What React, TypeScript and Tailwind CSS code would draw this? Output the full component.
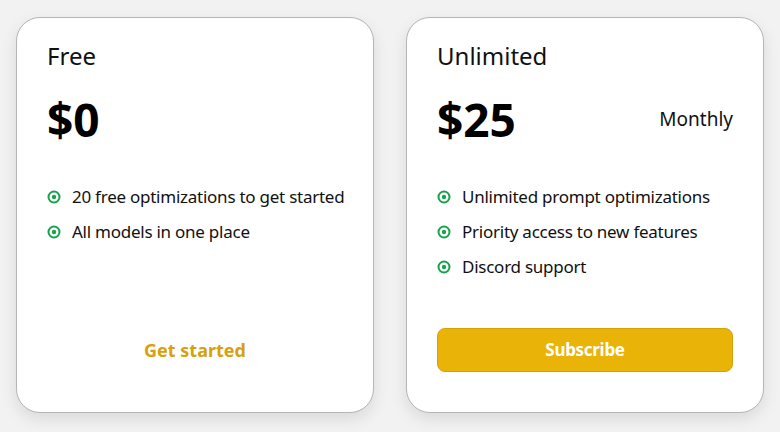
import React from "react";

function Dot() {
  return (
    <svg width="14" height="14" viewBox="0 0 14 14" className="shrink-0">
      <circle cx="7" cy="7" r="5.5" fill="none" stroke="#16a34a" strokeWidth="2" />
      <circle cx="7" cy="7" r="2.2" fill="#16a34a" />
    </svg>
  );
}

function Feature({ text }: { text: string }) {
  return (
    <li className="flex items-center gap-[11px] h-[35px] text-[17px] tracking-[-0.25px] text-[#111] whitespace-nowrap">
      <Dot />
      <span>{text}</span>
    </li>
  );
}

export default function App() {
  return (
    <div
      className="w-[780px] h-[432px] bg-[#f2f2f2] grid grid-cols-2 gap-[32px] px-[16px] pt-[17px] pb-[19px]"
      style={{ fontFamily: '"Noto Sans", "Open Sans", sans-serif' }}
    >
      <div className="min-w-0 flex flex-col bg-white border border-[#b5b5b5] rounded-[24px] shadow-[0_6px_16px_rgba(0,0,0,0.10)] px-[30px] pt-[22px] pb-[40px]">
        <h2 className="text-[24px] leading-[32px] text-[#111]">Free</h2>
        <div className="flex items-center justify-between mt-[15px] h-[64px]">
          <span className="text-[46px] font-bold text-black">$0</span>
        </div>
        <ul className="mt-[28px] flex flex-col">
          <Feature text="20 free optimizations to get started" />
          <Feature text="All models in one place" />
        </ul>
        <button className="mt-auto h-[44px] w-full rounded-[8px] text-[18px] font-bold text-[#d6a10b]">
          Get started
        </button>
      </div>
      <div className="min-w-0 flex flex-col bg-white border border-[#b5b5b5] rounded-[24px] shadow-[0_6px_16px_rgba(0,0,0,0.10)] px-[30px] pt-[22px] pb-[40px]">
        <h2 className="text-[24px] leading-[32px] text-[#111]">Unlimited</h2>
        <div className="flex items-center justify-between mt-[15px] h-[64px]">
          <span className="text-[46px] font-bold text-black">$25</span>
          <span className="text-[19px] text-[#111]">Monthly</span>
        </div>
        <ul className="mt-[28px] flex flex-col">
          <Feature text="Unlimited prompt optimizations" />
          <Feature text="Priority access to new features" />
          <Feature text="Discord support" />
        </ul>
        <button className="mt-auto h-[44px] w-full rounded-[8px] bg-[#e9b308] border border-[#d6a106] text-[17px] tracking-[-0.3px] font-bold text-white">
          Subscribe
        </button>
      </div>
    </div>
  );
}
